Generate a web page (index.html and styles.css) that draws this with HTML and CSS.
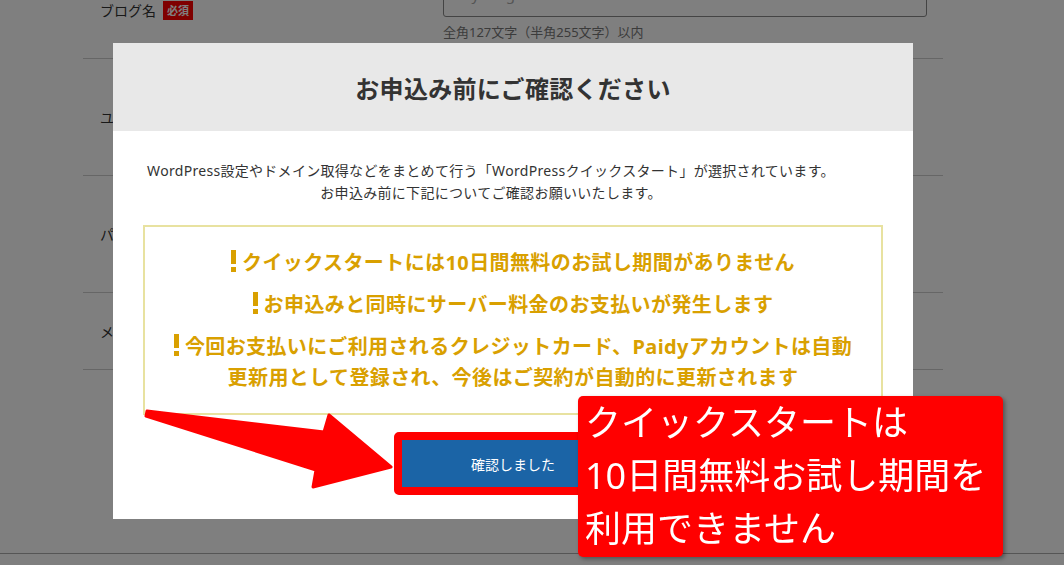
FILE: index.html
```html
<!DOCTYPE html>
<html lang="ja">
<head>
<meta charset="utf-8">
<title>お申込み前にご確認ください</title>
<link rel="stylesheet" href="styles.css">
</head>
<body>
<main class="page">
  <div class="form">
    <div class="row row-first">
      <div class="label">ブログ名<span class="badge">必須</span></div>
      <div class="field">
        <input class="input" type="text" placeholder="My Blog">
        <p class="help">全角127文字（半角255文字）以内</p>
      </div>
    </div>
    <div class="row row-tall">
      <div class="label">ユーザー名</div>
    </div>
    <div class="row row-tall">
      <div class="label">パスワード</div>
    </div>
    <div class="row row-short">
      <div class="label">メールアドレス</div>
    </div>
  </div>
  <div class="foot"></div>
</main>

<div class="overlay">
  <div class="modal">
    <div class="modal-head">
      <h2 class="modal-title">お申込み前にご確認ください</h2>
    </div>
    <div class="modal-body">
      <p class="lead">WordPress設定やドメイン取得などをまとめて行う「WordPressクイックスタート」が選択されています。<br>お申込み前に下記についてご確認お願いいたします。</p>
      <div class="notice">
        <p class="notice-item"><span class="ex"></span>クイックスタートには10日間無料のお試し期間がありません</p>
        <p class="notice-item"><span class="ex"></span>お申込みと同時にサーバー料金のお支払いが発生します</p>
        <p class="notice-item"><span class="ex"></span>今回お支払いにご利用されるクレジットカード、Paidyアカウントは自動<br>更新用として登録され、今後はご契約が自動的に更新されます</p>
      </div>
      <div class="actions">
        <span class="mark"><button class="btn" type="button">確認しました</button></span>
      </div>
    </div>
  </div>

  <svg class="arrow" viewBox="0 0 260 95" width="260" height="95" aria-hidden="true">
    <polygon points="7,11 184,32 189,15 251,67 173,87 176,70 6,16" fill="#ff0000" stroke="#ff0000" stroke-width="3" stroke-linejoin="round"/>
  </svg>

  <div class="callout">
    <p class="callout-text">クイックスタートは<br>10日間無料お試し期間を<br>利用できません</p>
  </div>
</div>
</body>
</html>
```

FILE: styles.css
```css
* { box-sizing: border-box; }

html, body {
  margin: 0;
  padding: 0;
  height: 100%;
  overflow: hidden;
}

body {
  background: #ffffff;
  font-family: "Noto Sans", "Noto Sans CJK JP", sans-serif;
  color: #333;
}

/* background page */
.page {
  height: 100%;
}

.form {
  width: 860px;
  margin: -40px 0 0 83px;
}

.row {
  display: grid;
  grid-template-columns: 360px 484px;
  align-items: center;
  border-bottom: 1px solid #cccccc;
}

.row-first {
  padding: 19px 0 17px;
}

.row-tall { height: 117px; }
.row-short { height: 77px; }

.label {
  padding-left: 17px;
  font-size: 14px;
  color: #333;
  display: flex;
  align-items: center;
}

.badge {
  display: inline-block;
  margin-left: 7px;
  padding: 0 4px;
  height: 19px;
  line-height: 19px;
  background: #ff0000;
  color: #ffffff;
  font-size: 11px;
  font-weight: bold;
}

.input {
  display: block;
  width: 484px;
  height: 38px;
  border: 1px solid #888;
  border-radius: 3px;
  padding: 0 14px 8px;
  font-family: inherit;
  font-size: 15px;
  color: #333;
  background: #fff;
}

.input::placeholder { color: #aaa; }

.help {
  margin: 6px 0 0;
  font-size: 13px;
  line-height: 18px;
  color: #777;
}

.foot {
  position: fixed;
  left: 0;
  right: 0;
  top: 553px;
  height: 12px;
  border-top: 1px solid #aaaaaa;
}

/* overlay & modal */
.overlay {
  position: fixed;
  inset: 0;
  background: rgba(0, 0, 0, 0.5);
  display: flex;
  align-items: flex-start;
  padding: 43px 0 0 113px;
}

.modal {
  width: 800px;
  background: #ffffff;
}

.modal-head {
  height: 88px;
  background: #e8e8e8;
  display: flex;
  align-items: center;
  justify-content: center;
}

.modal-title {
  margin: 0;
  font-size: 24px;
  font-weight: bold;
  color: #333;
  letter-spacing: 0.3px;
}

.modal-body {
  padding: 29px 30px 24px;
}

.lead {
  margin: 0 44px 0 0;
  font-size: 14px;
  line-height: 22px;
  color: #333;
  text-align: center;
  white-space: nowrap;
  letter-spacing: 0.3px;
}

.notice {
  margin-top: 21px;
  border: 2px solid #e8e2a0;
  padding: 20px 16px;
  display: flex;
  flex-direction: column;
  gap: 11px;
}

.notice-item {
  margin: 0;
  font-size: 20px;
  line-height: 31px;
  font-weight: bold;
  color: #d9a000;
  text-align: center;
  letter-spacing: 0.4px;
}

.ex {
  display: inline-block;
  width: 5px;
  height: 22px;
  margin-right: 6px;
  vertical-align: -2px;
  background: linear-gradient(#d9a000 0 14px, transparent 14px 17px, #d9a000 17px 22px);
}

.actions {
  margin-top: 17px;
  display: flex;
  justify-content: center;
}

.mark {
  display: inline-block;
  border: 8px solid #ff0000;
  border-radius: 5px;
}

.btn {
  display: block;
  width: 222px;
  height: 47px;
  border: none;
  background: #1b64a6;
  color: #ffffff;
  font-family: inherit;
  font-size: 14px;
}

/* annotations */
.arrow {
  position: absolute;
  left: 140px;
  top: 400px;
}

.callout {
  position: absolute;
  left: 578px;
  top: 396px;
  width: 425px;
  height: 161px;
  background: #ff0000;
  border-radius: 5px;
  box-shadow: 2px 2px 4px rgba(0, 0, 0, 0.35);
  padding: 0 0 0 7px;
}

.callout-text {
  margin: 0;
  font-size: 36px;
  line-height: 53px;
  color: #ffffff;
  white-space: nowrap;
}
```
